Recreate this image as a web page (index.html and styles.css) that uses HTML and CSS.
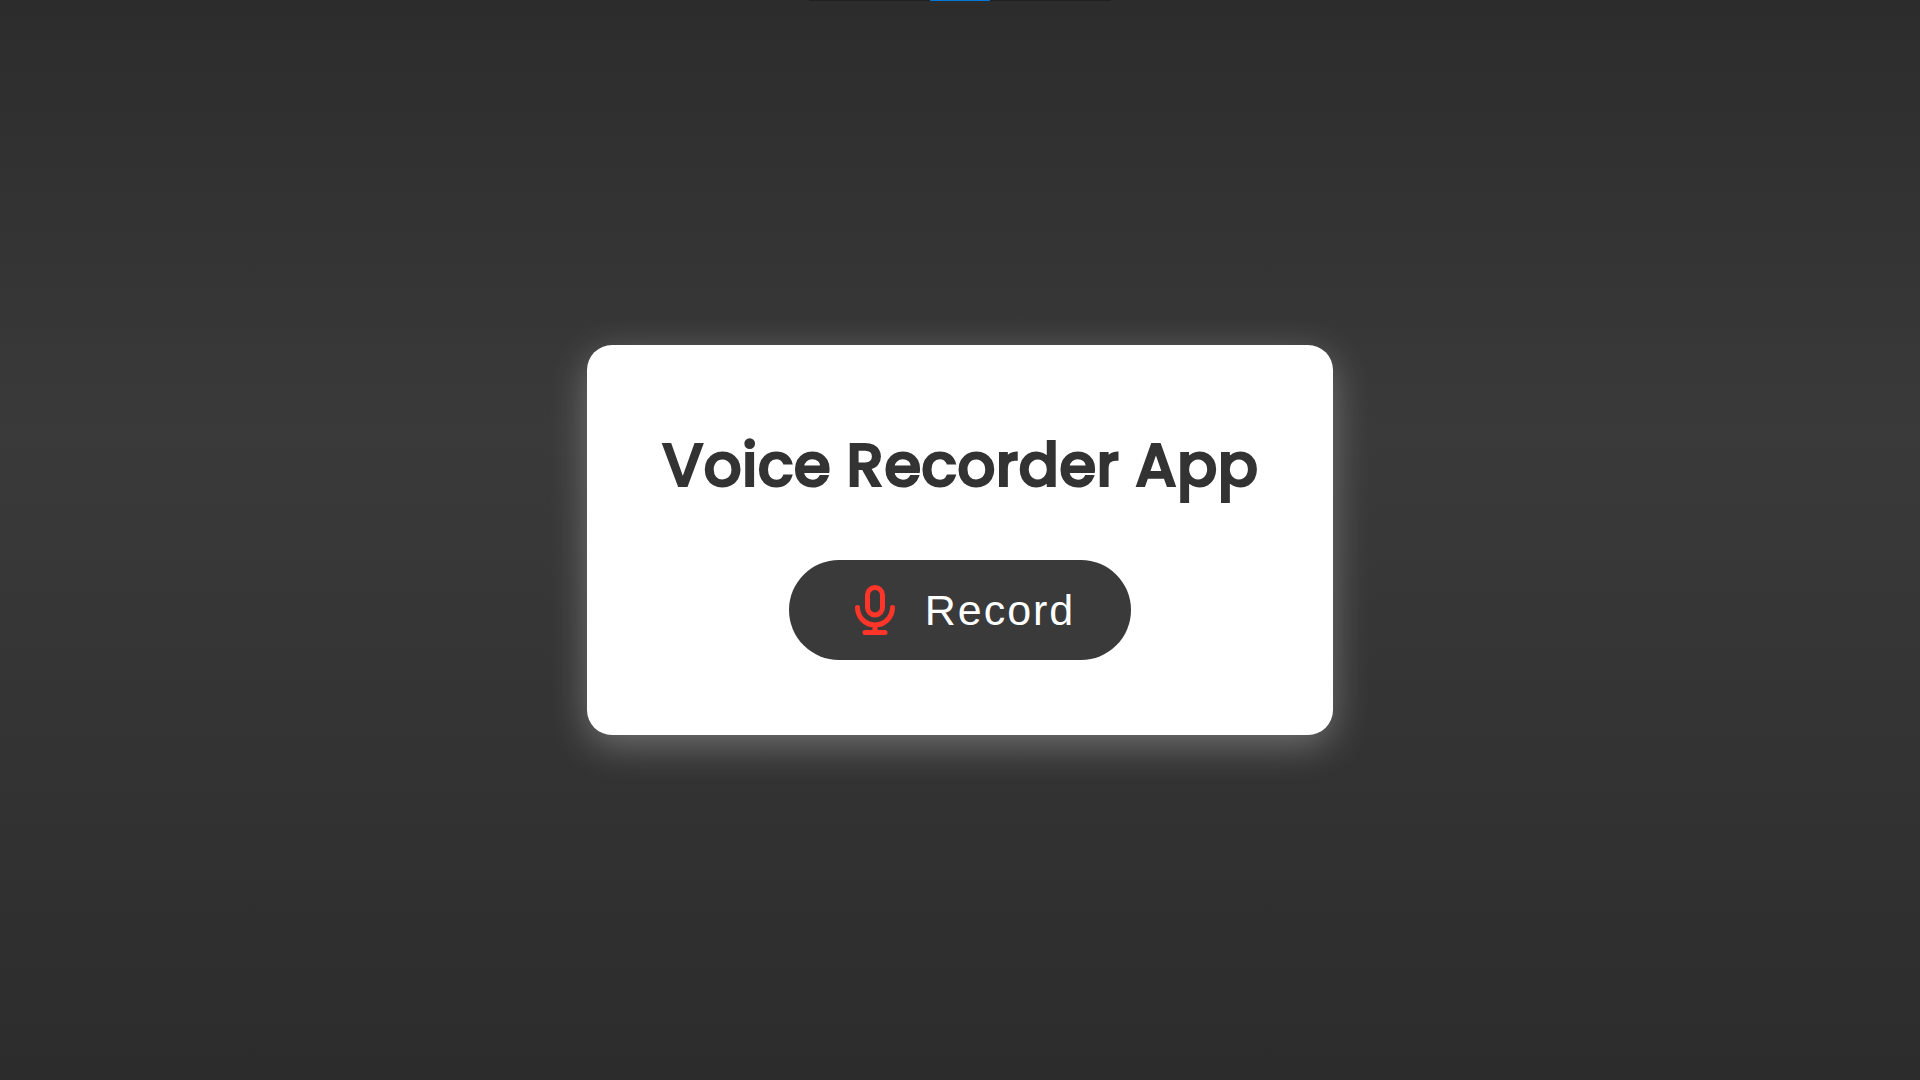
FILE: index.html
```
<!DOCTYPE html>
<html lang="en">
<head>
    <meta charset="UTF-8">
    <meta name="viewport" content="width=device-width, initial-scale=1.0">
    <title>Voice Recorder App</title>
    <link rel="stylesheet" href="styles.css">
</head>
<body>

<div class="top-bar"><span class="top-bar-active"></span></div>

<div class="container">
    <h1>Voice Recorder App</h1>

    <button type="button" class="record-btn">
        <svg class="mic-icon" viewBox="0 0 24 24" aria-hidden="true">
            <rect x="9" y="3" width="6" height="11" rx="3"/>
            <path d="M5 11a7 7 0 0 0 14 0M12 18v3M8 21h8"/>
        </svg>
        <span>Record</span>
    </button>
</div>

</body>
</html>
```
FILE: styles.css
```
* {
    box-sizing: border-box;
}
body {
    font-family: Poppins, Inter, sans-serif;
    background: linear-gradient(#2c2c2c, #3a3a3a 40%, #2c2c2c);
    display: flex;
    justify-content: center;
    align-items: center;
    min-height: 100vh;
    margin: 0;
}
.top-bar {
    position: absolute;
    top: 0;
    left: 50%;
    transform: translateX(-50%);
    display: flex;
    justify-content: center;
    width: 302px;
    height: 1px;
    background: #202020;
}
.top-bar-active {
    width: 60px;
    background: #0078d7;
}
.container {
    background: #fff;
    padding: 75px;
    border-radius: 25px;
    box-shadow: 0 10px 38px rgba(255, 255, 255, 0.3);
    text-align: center;
}
h1 {
    color: #333;
    font-size: 60px;
    font-weight: 500;
    line-height: 90px;
    margin: 0 0 50px;
    -webkit-text-stroke: 2px #333;
}
.record-btn {
    display: inline-flex;
    align-items: center;
    gap: 20px;
    padding: 20px 56px;
    border: none;
    border-radius: 50px;
    background: #3a3a3a;
    color: #fff;
    font-family: Arial, "Liberation Sans", sans-serif;
    font-size: 43px;
    letter-spacing: 2px;
    vertical-align: top;
    cursor: pointer;
}
.record-btn:hover {
    background: #2c2c2c;
}
.mic-icon {
    width: 60px;
    height: 60px;
    fill: none;
    stroke: #ff3529;
    stroke-width: 2;
    stroke-linecap: round;
    stroke-linejoin: round;
}
```
